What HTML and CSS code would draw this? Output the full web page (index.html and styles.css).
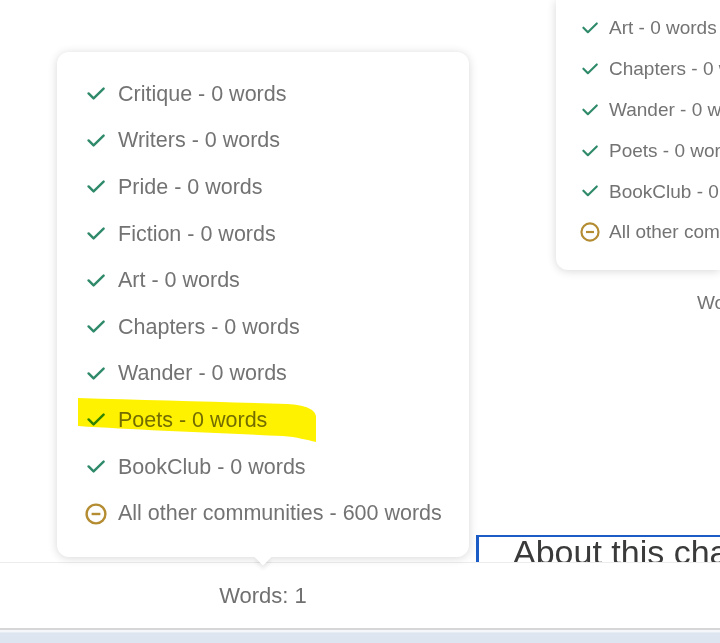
FILE: index.html
```html
<!DOCTYPE html>
<html lang="en">
<head>
    <meta charset="UTF-8">
    <meta name="viewport" content="width=device-width, initial-scale=1.0">
    <title>Community word counts</title>
    <link rel="stylesheet" href="styles.css">
</head>
<body>
    <svg width="0" height="0" class="defs">
        <symbol id="i-check" viewBox="0 0 18 14">
            <path d="M1.6 6.4 L6.6 11.4 L16.6 1.6" fill="none" stroke="#2f8a6a" stroke-width="2.4" stroke-linecap="round" stroke-linejoin="round"/>
        </symbol>
        <symbol id="i-other" viewBox="0 0 22 22">
            <circle cx="11" cy="11" r="9.4" fill="none" stroke="#b48c32" stroke-width="2.4"/>
            <path d="M6.6 11 H15.4" stroke="#b48c32" stroke-width="2.4"/>
        </symbol>
    </svg>

    <div class="screen">
        <div class="stage">
            <section class="popover main">
                <ul class="list">
                    <li><svg class="icon check"><use href="#i-check"/></svg>Critique - 0 words</li>
                    <li><svg class="icon check"><use href="#i-check"/></svg>Writers - 0 words</li>
                    <li><svg class="icon check"><use href="#i-check"/></svg>Pride - 0 words</li>
                    <li><svg class="icon check"><use href="#i-check"/></svg>Fiction - 0 words</li>
                    <li><svg class="icon check"><use href="#i-check"/></svg>Art - 0 words</li>
                    <li><svg class="icon check"><use href="#i-check"/></svg>Chapters - 0 words</li>
                    <li><svg class="icon check"><use href="#i-check"/></svg>Wander - 0 words</li>
                    <li><svg class="icon check"><use href="#i-check"/></svg>Poets - 0 words</li>
                    <li><svg class="icon check"><use href="#i-check"/></svg>BookClub - 0 words</li>
                    <li><svg class="icon other"><use href="#i-other"/></svg>All other communities - 600 words</li>
                </ul>
                <!-- highlighter stroke drawn over the Poets row -->
                <svg class="marker" viewBox="0 0 412 505" width="412" height="505">
                    <path d="M21 346 C 90 348, 170 350, 230 352 C 250 353, 258 358, 259 364 L 259 390 C 250 388, 240 385, 226 384 C 160 381, 80 378, 21 374 Z" fill="#fff200"/>
                </svg>
            </section>

            <div class="side">
                <section class="popover mini">
                    <ul class="list">
                        <li><svg class="icon check"><use href="#i-check"/></svg>Art - 0 words</li>
                        <li><svg class="icon check"><use href="#i-check"/></svg>Chapters - 0 words</li>
                        <li><svg class="icon check"><use href="#i-check"/></svg>Wander - 0 words</li>
                        <li><svg class="icon check"><use href="#i-check"/></svg>Poets - 0 words</li>
                        <li><svg class="icon check"><use href="#i-check"/></svg>BookClub - 0 words</li>
                        <li><svg class="icon other"><use href="#i-other"/></svg>All other communities - 600 words</li>
                    </ul>
                </section>
                <div class="side-words">Words: 1</div>
                <div class="about">About this chapter</div>
            </div>
        </div>

        <footer class="status">
            <span class="status-text">Words: 1</span>
        </footer>
        <div class="taskbar"></div>
    </div>
</body>
</html>
```

FILE: styles.css
```css
* {
    box-sizing: border-box;
}

body {
    margin: 0;
    background: #ffffff;
    font-family: 'Liberation Sans', Arial, sans-serif;
    color: #737373;
    overflow: hidden;
}

.defs {
    position: absolute;
}

.screen {
    width: 720px;
    height: 643px;
    display: flex;
    flex-direction: column;
}

.stage {
    height: 562px;
    display: flex;
    position: relative;
}

.popover {
    background: #ffffff;
    position: relative;
}

.list {
    list-style: none;
    margin: 0;
    padding: 0;
}

.list li {
    display: flex;
    align-items: center;
    white-space: nowrap;
}

.icon {
    flex: none;
}

/* Main popover */
.popover.main {
    width: 412px;
    height: 505px;
    margin: 52px 0 0 57px;
    padding: 19px 0 0 30px;
    border-radius: 12px;
    box-shadow: 0 1px 10px rgba(0, 0, 0, 0.16);
}

.popover.main::after {
    content: '';
    position: absolute;
    left: 200px;
    bottom: -6px;
    width: 12px;
    height: 12px;
    background: #ffffff;
    transform: rotate(45deg);
    box-shadow: 3px 3px 4px rgba(0, 0, 0, 0.07);
}

.popover.main .list li {
    height: 46.6px;
    font-size: 21.5px;
    gap: 13px;
}

.popover.main .icon.check {
    width: 18px;
    height: 14px;
}

.popover.main .icon.other {
    width: 22px;
    height: 22px;
    margin: 0 -2px;
}

.marker {
    position: absolute;
    left: 0;
    top: 0;
    mix-blend-mode: multiply;
    pointer-events: none;
}

/* Right column, a second copy of the popover cut by the edge */
.side {
    flex: 1;
    margin-left: 7px;
    display: flex;
    flex-direction: column;
    min-width: 0;
}

.popover.mini {
    margin-left: 80px;
    height: 270px;
    padding: 8px 0 0 26px;
    border-bottom-left-radius: 12px;
    box-shadow: 0 1px 10px rgba(0, 0, 0, 0.16);
}

.popover.mini .list li {
    height: 40.8px;
    font-size: 19px;
    gap: 11px;
}

.popover.mini .icon.check {
    width: 16px;
    height: 12.5px;
}

.popover.mini .icon.other {
    width: 20px;
    height: 20px;
    margin: 0 -2px;
}

.side-words {
    margin-top: 22px;
    padding-left: 221px;
    font-size: 19px;
    line-height: 22px;
    white-space: nowrap;
}

.about {
    margin-top: auto;
    height: 27px;
    overflow: hidden;
    border-top: 2px solid #1c5cc6;
    border-left: 3px solid #1c5cc6;
    padding-left: 34px;
    font-size: 34px;
    line-height: 30px;
    color: #3a3a3a;
    white-space: nowrap;
}

/* Word count footer */
.status {
    height: 66px;
    border-top: 1px solid #ececec;
    padding-top: 21px;
}

.status-text {
    display: block;
    width: 526px;
    text-align: center;
    font-size: 22px;
    line-height: 24px;
    color: #707070;
}

.taskbar {
    flex: 1;
    border-top: 2px solid #d6d6d6;
    background: linear-gradient(#f4f6f9 0, #f4f6f9 2px, #dce5f0 3px, #dce5f0 100%);
}
```
